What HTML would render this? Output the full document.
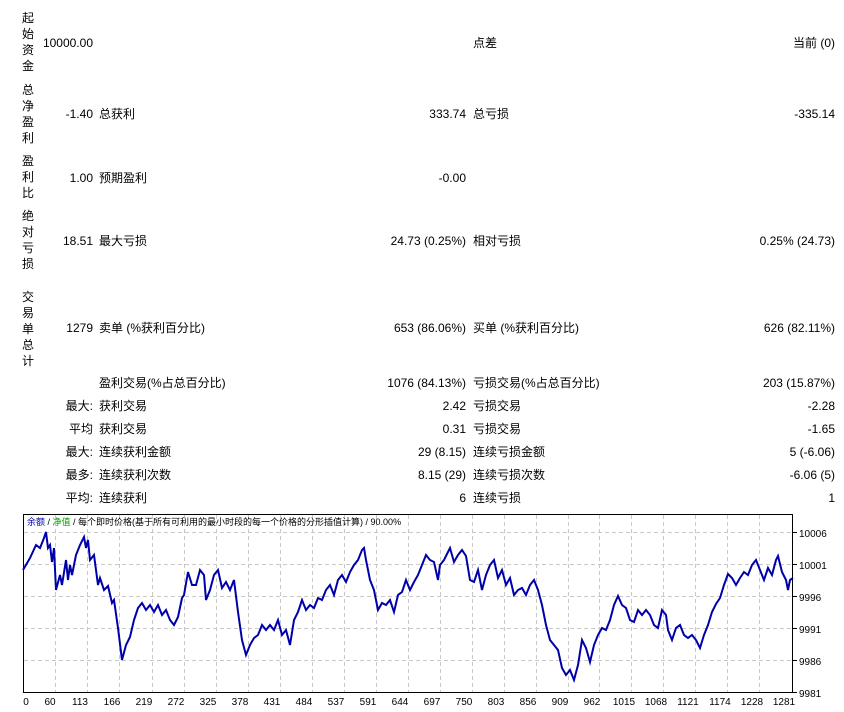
<!DOCTYPE html><html><head><meta charset="utf-8"><style>
body{margin:0;width:844px;height:712px;background:#fff;font-family:"Liberation Sans","Noto Sans CJK SC",sans-serif;font-size:12px;color:#000;position:relative;overflow:hidden}
.a{position:absolute;white-space:nowrap;line-height:14px}
.r{text-align:right}
.v{position:absolute;left:22px;width:14px;line-height:16px;font-size:12px}
</style></head><body>
<div class="v" style="top:10px">起<br>始<br>资<br>金</div>
<div class="v" style="top:82px">总<br>净<br>盈<br>利</div>
<div class="v" style="top:153px">盈<br>利<br>比</div>
<div class="v" style="top:208px">绝<br>对<br>亏<br>损</div>
<div class="v" style="top:289px">交<br>易<br>单<br>总<br>计</div>

<div class="a r" style="right:751px;top:36px">10000.00</div>
<div class="a" style="left:473px;top:36px">点差</div>
<div class="a r" style="right:9px;top:36px">当前 (0)</div>

<div class="a r" style="right:751px;top:107px">-1.40</div>
<div class="a" style="left:99px;top:107px">总获利</div>
<div class="a r" style="right:378px;top:107px">333.74</div>
<div class="a" style="left:473px;top:107px">总亏损</div>
<div class="a r" style="right:9px;top:107px">-335.14</div>

<div class="a r" style="right:751px;top:171px">1.00</div>
<div class="a" style="left:99px;top:171px">预期盈利</div>
<div class="a r" style="right:378px;top:171px">-0.00</div>

<div class="a r" style="right:751px;top:234px">18.51</div>
<div class="a" style="left:99px;top:234px">最大亏损</div>
<div class="a r" style="right:378px;top:234px">24.73 (0.25%)</div>
<div class="a" style="left:473px;top:234px">相对亏损</div>
<div class="a r" style="right:9px;top:234px">0.25% (24.73)</div>

<div class="a r" style="right:751px;top:321px">1279</div>
<div class="a" style="left:99px;top:321px">卖单 (%获利百分比)</div>
<div class="a r" style="right:378px;top:321px">653 (86.06%)</div>
<div class="a" style="left:473px;top:321px">买单 (%获利百分比)</div>
<div class="a r" style="right:9px;top:321px">626 (82.11%)</div>

<div class="a" style="left:99px;top:376px">盈利交易(%占总百分比)</div>
<div class="a r" style="right:378px;top:376px">1076 (84.13%)</div>
<div class="a" style="left:473px;top:376px">亏损交易(%占总百分比)</div>
<div class="a r" style="right:9px;top:376px">203 (15.87%)</div>

<div class="a r" style="right:751px;top:399px">最大:</div>
<div class="a" style="left:99px;top:399px">获利交易</div>
<div class="a r" style="right:378px;top:399px">2.42</div>
<div class="a" style="left:473px;top:399px">亏损交易</div>
<div class="a r" style="right:9px;top:399px">-2.28</div>

<div class="a r" style="right:751px;top:422px">平均</div>
<div class="a" style="left:99px;top:422px">获利交易</div>
<div class="a r" style="right:378px;top:422px">0.31</div>
<div class="a" style="left:473px;top:422px">亏损交易</div>
<div class="a r" style="right:9px;top:422px">-1.65</div>

<div class="a r" style="right:751px;top:445px">最大:</div>
<div class="a" style="left:99px;top:445px">连续获利金额</div>
<div class="a r" style="right:378px;top:445px">29 (8.15)</div>
<div class="a" style="left:473px;top:445px">连续亏损金额</div>
<div class="a r" style="right:9px;top:445px">5 (-6.06)</div>

<div class="a r" style="right:751px;top:468px">最多:</div>
<div class="a" style="left:99px;top:468px">连续获利次数</div>
<div class="a r" style="right:378px;top:468px">8.15 (29)</div>
<div class="a" style="left:473px;top:468px">连续亏损次数</div>
<div class="a r" style="right:9px;top:468px">-6.06 (5)</div>

<div class="a r" style="right:751px;top:491px">平均:</div>
<div class="a" style="left:99px;top:491px">连续获利</div>
<div class="a r" style="right:378px;top:491px">6</div>
<div class="a" style="left:473px;top:491px">连续亏损</div>
<div class="a r" style="right:9px;top:491px">1</div>

<svg width="844" height="712" style="position:absolute;left:0;top:0" font-family="Liberation Sans, Noto Sans CJK SC, sans-serif">
<rect x="23.5" y="514.5" width="769" height="178" fill="none" stroke="#000"/>
<g stroke="#c8c8c8" stroke-dasharray="4,3" stroke-width="1">
<path d="M55.5 515V692M87.5 515V692M119.5 515V692M152.5 515V692M184.5 515V692M216.5 515V692M248.5 515V692M280.5 515V692M312.5 515V692M344.5 515V692M376.5 515V692M408.5 515V692M440.5 515V692M472.5 515V692M504.5 515V692M536.5 515V692M568.5 515V692M599.5 515V692M631.5 515V692M663.5 515V692M695.5 515V692M727.5 515V692M759.5 515V692"/>
<path d="M24 532.5H792M24 564.5H792M24 596.5H792M24 628.5H792M24 660.5H792"/>
</g>
<polyline fill="none" stroke="#0000aa" stroke-width="2" points="23,570 30,558 36,545 40,548 44,538 46,532 48,548 50,545 52,562 54,548 56,590 60,575 62,585 66,560 68,580 70,565 72,575 76,555 80,545 84,537 86,548 88,540 90,560 94,555 98,585 100,578 104,590 108,586 112,603 114,600 118,628 122,660 126,645 130,637 134,620 138,608 142,603 146,610 150,605 154,612 158,605 162,615 166,610 170,620 174,625 178,617 182,598 184,595 188,572 192,585 196,585 200,570 204,575 206,600 210,590 214,575 218,570 222,588 226,582 230,590 234,580 238,612 242,640 246,655 250,645 254,638 258,635 262,625 266,630 270,625 274,630 278,620 282,635 286,630 290,645 294,620 298,612 302,600 306,610 310,605 314,608 318,598 322,600 326,590 330,585 334,595 338,580 342,575 346,582 350,572 354,565 358,560 362,550 364,548 366,560 370,580 374,590 378,610 382,603 386,605 390,600 394,612 398,595 402,592 406,580 410,590 414,582 418,575 422,565 426,555 430,560 434,562 438,580 440,565 444,560 448,552 450,548 454,562 458,555 462,550 466,556 470,580 474,582 478,570 482,590 486,575 490,565 494,560 498,578 502,570 506,585 510,578 514,595 518,590 522,588 526,595 530,585 534,580 538,590 542,605 546,625 550,640 554,645 558,650 562,668 566,675 570,670 574,680 578,665 582,640 586,648 590,662 594,645 598,635 602,628 606,630 610,620 614,605 618,596 622,605 626,608 630,620 634,622 638,610 642,615 646,610 650,615 654,625 658,628 662,610 666,615 668,630 672,640 676,628 680,625 684,635 688,638 692,635 696,640 700,648 704,635 708,625 712,612 716,604 720,598 724,585 728,574 732,578 736,585 740,578 744,572 748,575 752,565 756,560 760,570 764,580 768,568 772,575 776,560 778,556 782,572 786,580 788,590 790,580 793,578"/>
<text x="27" y="525" font-size="9"><tspan fill="#0000aa">余额</tspan> / <tspan fill="#00a000">净值</tspan> / 每个即时价格(基于所有可利用的最小时段的每一个价格的分形插值计算) / 90.00%</text>
<g font-size="10" text-anchor="middle">
<text x="26" y="705">0</text><text x="50" y="705">60</text><text x="80" y="705">113</text><text x="112" y="705">166</text><text x="144" y="705">219</text><text x="176" y="705">272</text><text x="208" y="705">325</text><text x="240" y="705">378</text><text x="272" y="705">431</text><text x="304" y="705">484</text><text x="336" y="705">537</text><text x="368" y="705">591</text><text x="400" y="705">644</text><text x="432" y="705">697</text><text x="464" y="705">750</text><text x="496" y="705">803</text><text x="528" y="705">856</text><text x="560" y="705">909</text><text x="592" y="705">962</text><text x="624" y="705">1015</text><text x="656" y="705">1068</text><text x="688" y="705">1121</text><text x="720" y="705">1174</text><text x="752" y="705">1228</text><text x="784" y="705">1281</text>
</g>
<g font-size="10"><text x="799" y="537">10006</text><text x="799" y="569">10001</text><text x="799" y="601">9996</text><text x="799" y="633">9991</text><text x="799" y="665">9986</text><text x="799" y="697">9981</text></g>
<path d="M793 532.5h4M793 564.5h4M793 596.5h4M793 628.5h4M793 660.5h4M793 692.5h4" stroke="#000"/>
</svg>
</body></html>
